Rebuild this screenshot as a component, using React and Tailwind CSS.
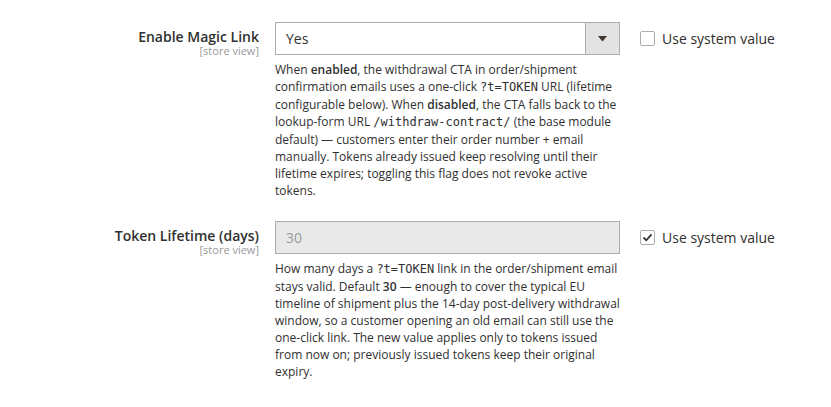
import React from 'react';

const Label = ({ title }) => (
  <div className="w-[259px] shrink-0 pt-[6px] text-right">
    <div className="text-[14px] font-semibold leading-[18px] text-[#303030]">{title}</div>
    <div className="-mt-[2px] text-[11px] leading-[13px] text-[#999]">[store view]</div>
  </div>
);

const Mono = ({ children }) => (
  <code className="font-['DejaVu_Sans_Mono',monospace] text-[12px]">{children}</code>
);

const SystemValue = ({ checked }) => (
  <label className="ml-[20px] flex items-center gap-[7px] pt-[6px] text-[14px] text-[#303030]">
    <span className="flex h-[15px] w-[15px] items-center justify-center rounded-[2px] border border-[#adadad] bg-white">
      {checked && (
        <svg width="11" height="11" viewBox="0 0 11 11">
          <path d="M1.5 5.5 L4.3 8.3 L9.5 2.3" fill="none" stroke="#333" strokeWidth="1.8" />
        </svg>
      )}
    </span>
    Use system value
  </label>
);

export default function App() {
  return (
    <div className="min-h-[407px] bg-white font-['Open_Sans',sans-serif] text-[#303030]">
      <div className="pt-[22px]">
        {/* Enable Magic Link */}
        <div className="flex items-start">
          <Label title="Enable Magic Link" />
          <div className="ml-[16px] w-[345px] shrink-0">
            <div className="flex h-[33px] border border-[#adadad] bg-white">
              <div className="flex-1 pl-[10px] text-[14px] leading-[31px]">Yes</div>
              <div className="flex w-[34px] items-center justify-center border-l border-[#adadad] bg-[#e3e3e3]">
                <svg width="9" height="6" viewBox="0 0 9 6">
                  <path d="M0 0 H9 L4.5 5.5 Z" fill="#41362f" />
                </svg>
              </div>
            </div>
            <p className="mt-[6px] w-[350px] text-[12px] leading-[17px] text-[#303030]">
              When <b className="font-semibold">enabled</b>, the withdrawal CTA in order/shipment confirmation emails uses a one-click <Mono>?t=TOKEN</Mono> URL (lifetime configurable below). When <b className="font-semibold">disabled</b>, the CTA falls back to the lookup-form URL <Mono>/withdraw-contract/</Mono> (the base module default) — customers enter their order number + email manually. Tokens already issued keep resolving until their lifetime expires; toggling this flag does not revoke active tokens.
            </p>
          </div>
          <SystemValue checked={false} />
        </div>

        {/* Token Lifetime */}
        <div className="mt-[22px] flex items-start">
          <Label title="Token Lifetime (days)" />
          <div className="ml-[16px] w-[345px] shrink-0">
            <div className="h-[33px] border border-[#adadad] bg-[#e9e9e9] pl-[10px] text-[14px] leading-[31px] text-[#999]">
              30
            </div>
            <p className="mt-[6px] w-[350px] text-[12px] leading-[17px] text-[#303030]">
              How many days a <Mono>?t=TOKEN</Mono> link in the order/shipment email stays valid. Default <b className="font-semibold">30</b> — enough to cover the typical EU timeline of shipment plus the 14-day post-delivery withdrawal window, so a customer opening an old email can still use the one-click link. The new value applies only to tokens issued from now on; previously issued tokens keep their original expiry.
            </p>
          </div>
          <SystemValue checked={true} />
        </div>
      </div>
    </div>
  );
}
